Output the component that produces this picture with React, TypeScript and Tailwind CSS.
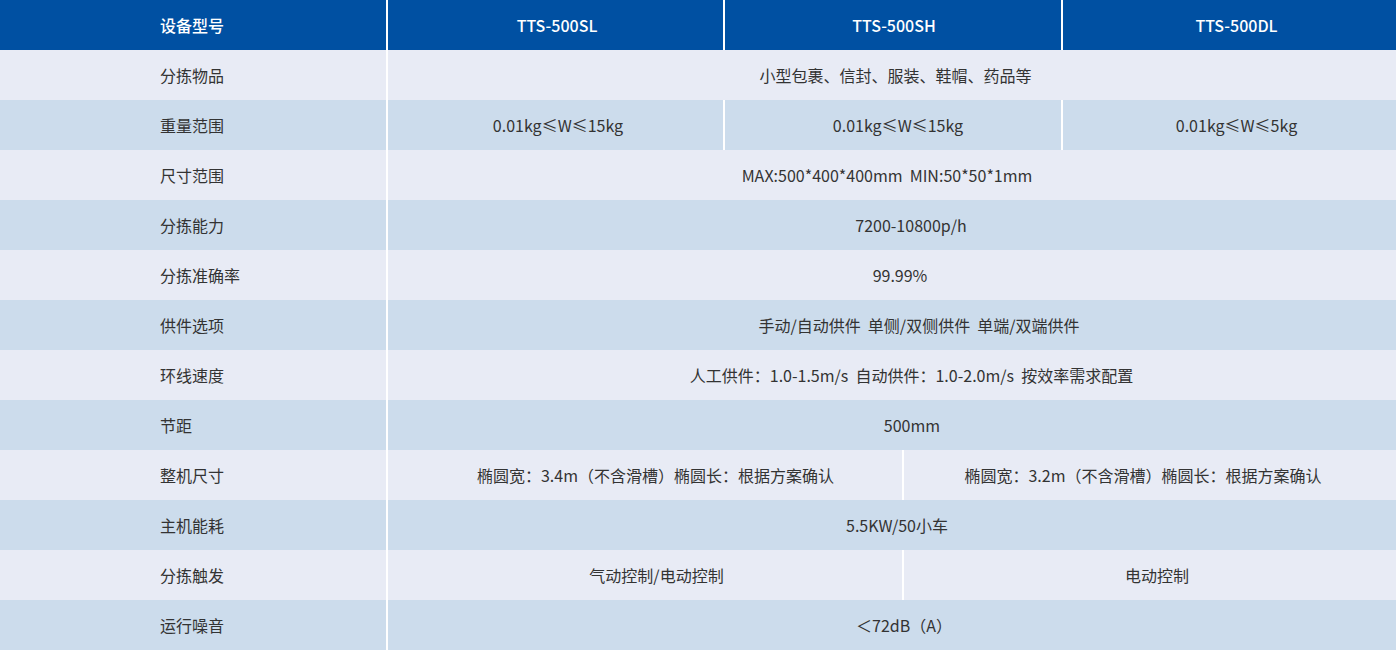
import React from "react";

type Cell = { text: string; w: string; o?: string };
type Row = { label: string; cells: Cell[] };

const rows: Row[] = [
  { label: "分拣物品", cells: [{ text: "小型包裹、信封、服装、鞋帽、药品等", w: "w-[1008px]", o: "pl-[7px]" }] },
  {
    label: "重量范围",
    cells: [
      { text: "0.01kg≤W≤15kg", w: "w-[335px]", o: "pl-[5px]" },
      { text: "0.01kg≤W≤15kg", w: "w-[336px]", o: "pl-[10px]" },
      { text: "0.01kg≤W≤5kg", w: "w-[333px]", o: "pl-[14px]" },
    ],
  },
  { label: "尺寸范围", cells: [{ text: "MAX:500*400*400mm  MIN:50*50*1mm", w: "w-[1008px]", o: "pr-[10px]" }] },
  { label: "分拣能力", cells: [{ text: "7200-10800p/h", w: "w-[1008px]", o: "pl-[38px]" }] },
  { label: "分拣准确率", cells: [{ text: "99.99%", w: "w-[1008px]", o: "pl-[16px]" }] },
  { label: "供件选项", cells: [{ text: "手动/自动供件  单侧/双侧供件  单端/双端供件", w: "w-[1008px]", o: "pl-[54px]" }] },
  { label: "环线速度", cells: [{ text: "人工供件：1.0-1.5m/s  自动供件：1.0-2.0m/s  按效率需求配置", w: "w-[1008px]", o: "pl-[39px]" }] },
  { label: "节距", cells: [{ text: "500mm", w: "w-[1008px]", o: "pl-[40px]" }] },
  {
    label: "整机尺寸",
    cells: [
      { text: "椭圆宽：3.4m（不含滑槽）椭圆长：根据方案确认", w: "w-[514px]", o: "pl-[21px]" },
      { text: "椭圆宽：3.2m（不含滑槽）椭圆长：根据方案确认", w: "w-[492px]", o: "pr-[14px]" },
    ],
  },
  { label: "主机能耗", cells: [{ text: "5.5KW/50小车", w: "w-[1008px]", o: "pl-[10px]" }] },
  {
    label: "分拣触发",
    cells: [
      { text: "气动控制/电动控制", w: "w-[514px]", o: "pl-[23px]" },
      { text: "电动控制", w: "w-[492px]", o: "pl-[14px]" },
    ],
  },
  { label: "运行噪音", cells: [{ text: "＜72dB（A）", w: "w-[1008px]", o: "pl-[24px]" }] },
];

const heads: Cell[] = [
  { text: "TTS-500SL", w: "w-[335px]", o: "pl-[3px]" },
  { text: "TTS-500SH", w: "w-[336px]", o: "pl-[2px]" },
  { text: "TTS-500DL", w: "w-[333px]", o: "pl-[14px]" },
];

export default function App() {
  return (
    <div
      className="w-[1396px] h-[650px] bg-white flex flex-col overflow-hidden"
      style={{ fontFamily: '"Noto Sans CJK SC", "Noto Sans", sans-serif' }}
    >
      <div className="flex h-[50px] gap-[2px] bg-white">
        <div className="w-[386px] bg-[#0050a2] flex items-center pl-[160px] text-white font-medium text-[16px]">设备型号</div>
        {heads.map((h) => (
          <div key={h.text} className={`${h.w} ${h.o} bg-[#0050a2] flex items-center justify-center text-white font-medium text-[16px]`}>
            {h.text}
          </div>
        ))}
      </div>
      {rows.map((r, i) => {
        const bg = i % 2 === 0 ? "bg-[#e8ebf5]" : "bg-[#ccdcec]";
        return (
          <div key={r.label} className="flex h-[50px] gap-[2px] bg-white">
            <div className={`w-[386px] ${bg} flex items-center pl-[160px] text-[#333] text-[16px]`}>{r.label}</div>
            {r.cells.map((c, j) => (
              <div key={j} className={`${c.w} ${c.o ?? ""} ${bg} flex items-center justify-center text-[#333] text-[16px] whitespace-pre`}>
                {c.text}
              </div>
            ))}
          </div>
        );
      })}
    </div>
  );
}
